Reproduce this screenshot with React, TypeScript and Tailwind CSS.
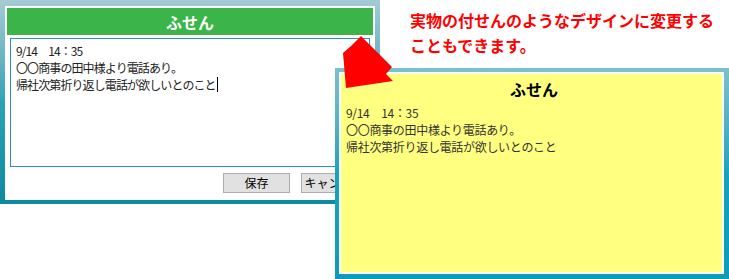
const jp = '"Noto Sans CJK JP", "Noto Sans", sans-serif';

function Arrow() {
  return (
    <svg className="absolute left-[330px] top-[30px]" width="70" height="65" viewBox="330 30 70 65">
      <polygon points="361,36 392,67 386,74 393,81 346,88 343,53 351,46" fill="#ff0000" />
    </svg>
  );
}

function Memo({ cursor }: { cursor?: boolean }) {
  return (
    <>
      <div>9/14　14：35</div>
      <div>〇〇商事の田中様より電話あり。</div>
      <div className="flex items-center">
        帰社次第折り返し電話が欲しいとのこと
        {cursor && <span className="inline-block w-px h-[15px] bg-black ml-px" />}
      </div>
    </>
  );
}

export default function App() {
  return (
    <div className="relative w-[729px] h-[279px] overflow-hidden bg-white" style={{ fontFamily: jp }}>
      {/* 通常のふせん画面 */}
      <div className="absolute left-0 top-0 w-[380px] h-[204px] bg-gradient-to-b from-[#a3cbd3] via-[#2aa2b6] to-[#0c8aa0] pl-[5px] pr-[5px] pt-[6px] pb-[4px]">
        <div className="h-full bg-white px-[2px] pt-[2px] flex flex-col">
          <div className="h-[27px] bg-[#3bb44a] flex items-center justify-center text-white font-bold text-[16px]">
            ふせん
          </div>
          <div className="mx-[3px] mt-[3px] h-[129px] border border-[#2c8de0] pl-[5px] pt-[3px] text-[12px] leading-[17px] tracking-[-0.9px] text-[#222]">
            <Memo cursor />
          </div>
          <div className="flex justify-end gap-[11px] mt-[6px] pr-[5px]">
            <button className="w-[67px] h-[20px] bg-[#e1e1e1] border border-[#adadad] text-[12px] leading-none text-black">
              保存
            </button>
            <button className="w-[67px] h-[20px] bg-[#e1e1e1] border border-[#adadad] text-[12px] leading-none text-black whitespace-nowrap">
              キャンセル
            </button>
          </div>
        </div>
      </div>

      {/* 説明 */}
      <div className="absolute left-[410px] top-[8px] text-[16px] leading-[25px] font-bold text-[#ff0000]">
        <div>実物の付せんのようなデザインに変更する</div>
        <div>こともできます。</div>
      </div>

      {/* 付せん風デザイン */}
      <div className="absolute left-[335px] top-[68px] w-[395px] h-[213px] bg-gradient-to-b from-[#7dbfcc] via-[#18a2b9] to-[#0e9bb8] pl-[4px] pr-[6px] pt-[4px] pb-[7px]">
        <div className="h-full bg-[#f4fbfb] p-[2px]">
          <div className="h-full bg-[#ffff80] pl-[5px]">
            <div className="h-[30px] flex items-center justify-center font-bold text-[16px] text-black">
              ふせん
            </div>
            <div className="text-[12px] leading-[17px] tracking-[-0.3px] text-[#333]">
              <Memo />
            </div>
          </div>
        </div>
      </div>

      <Arrow />
    </div>
  );
}
